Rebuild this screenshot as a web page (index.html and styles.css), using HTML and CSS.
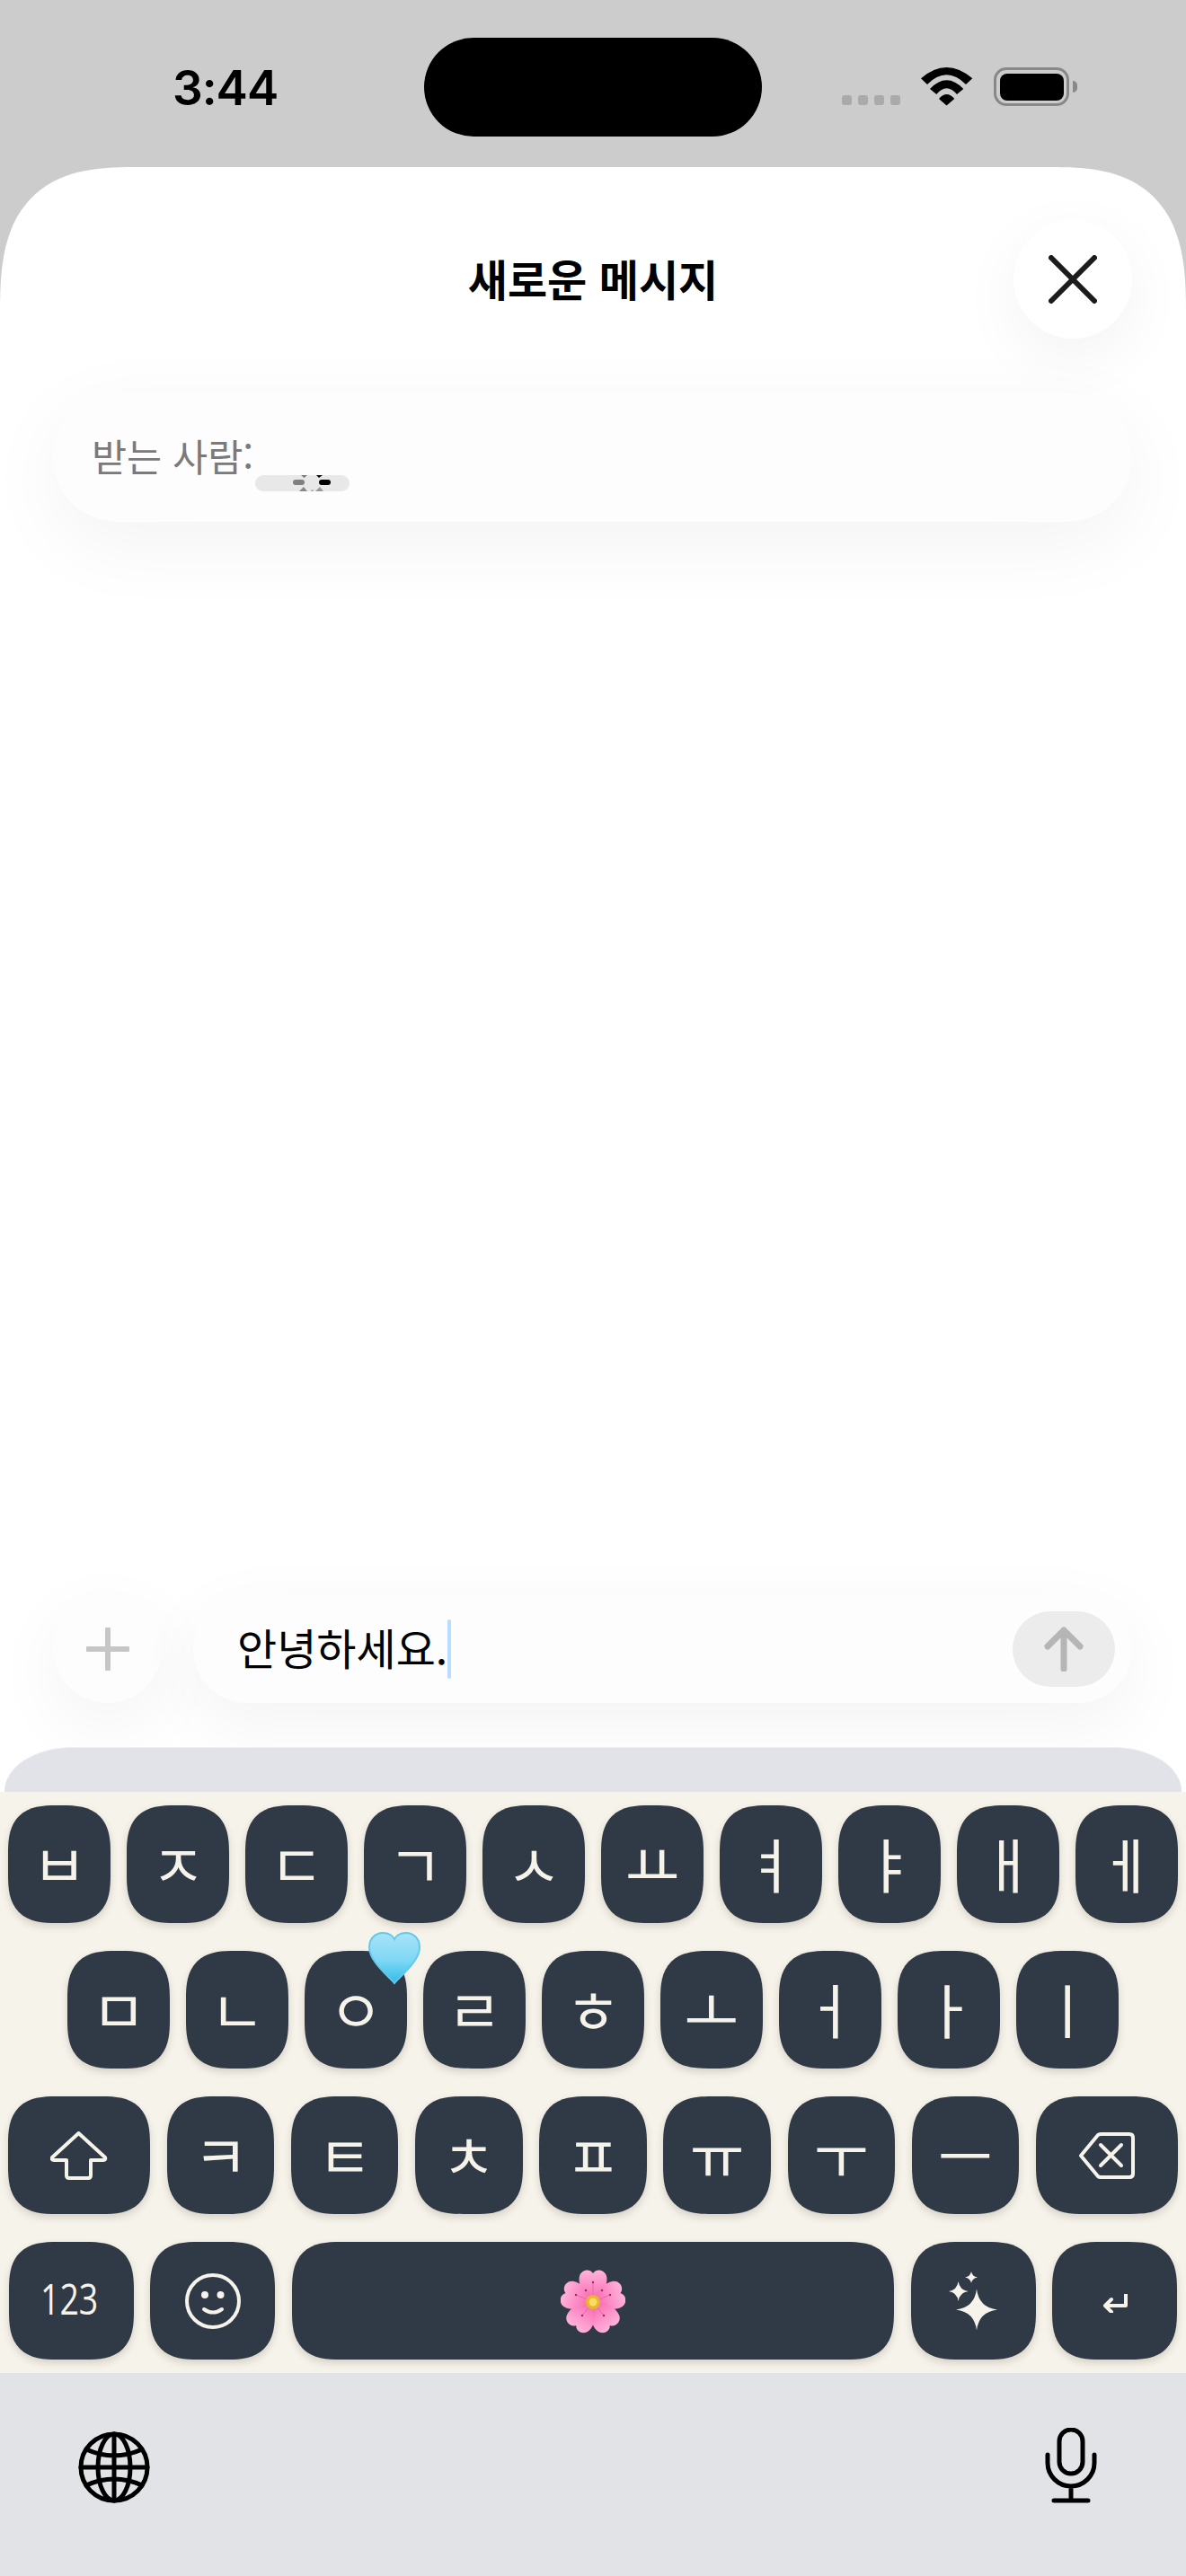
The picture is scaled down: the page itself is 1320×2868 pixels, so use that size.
FILE: index.html
```html
<!DOCTYPE html>
<html lang="ko">
<head>
<meta charset="utf-8">
<title>새로운 메시지</title>
<link rel="stylesheet" href="styles.css">
</head>
<body>
<div class="phone">
  <header class="statusbar">
    <div class="time">3:44</div>
    <div class="island"></div>
    <div class="status-icons">
      <div class="signal"><i></i><i></i><i></i><i></i></div>
      <svg class="wifi" width="58" height="43" viewBox="0 0 58 43"><path d="M0 12.3Q28.5-12.3 57.3 12.3L50 19Q28.5-2.4 7 19Z"/><path d="M10 24Q28.5 4.6 47.3 24L40 30Q28.5 16.6 17.3 30Z"/><path d="M20 35Q28.5 25 37.3 35L28.5 42.5Z"/></svg>
      <div class="battery-wrap"><div class="battery"><div class="battery-fill"></div></div><div class="battery-nub"></div></div>
    </div>
  </header>
  <main class="sheet">
    <div class="sheet-head">
      <div></div>
      <h1 class="title">새로운 메시지</h1>
      <button class="close">
        <svg width="54" height="54" viewBox="0 0 54 54"><path d="M3 3L51 51M51 3L3 51"/></svg>
      </button>
    </div>
    <div class="recipient">
      <span class="to-label">받는 사람:</span>
      <span class="chip">
        <svg width="105" height="18" viewBox="0 0 105 18"><rect x="42" y="5" width="13" height="6" rx="3" fill="#808080"/><rect x="71" y="5" width="13" height="6" rx="3" fill="#000"/><path d="M51 0H58L54.500 3Z" fill="#777"/><path d="M68 0H75L71 3Z" fill="#000"/><path d="M49 18L54 13L58 18Z" fill="#888"/><path d="M67 18L72 13L76 18Z" fill="#999"/><rect x="62" y="16.500" width="3" height="1.500" fill="#aaa"/></svg>
      </span>
    </div>
    <div class="spacer"></div>
    <div class="composer">
      <button class="plus">
        <svg width="48" height="48" viewBox="0 0 48 48"><path d="M24 2V46M2 24H46"/></svg>
      </button>
      <div class="input">
        <span class="input-text">안녕하세요.</span><span class="caret"></span>
        <button class="send">
          <svg width="44" height="50" viewBox="0 0 44 50"><path d="M22 47V4M4 22L22 4L40 22"/></svg>
        </button>
      </div>
    </div>
    <section class="keyboard">
      <div class="kb-cap"></div>
      <div class="keys">
        <div class="row">
          <div class="key">ㅂ</div><div class="key">ㅈ</div><div class="key">ㄷ</div><div class="key">ㄱ</div><div class="key">ㅅ</div><div class="key">ㅛ</div><div class="key">ㅕ</div><div class="key">ㅑ</div><div class="key">ㅐ</div><div class="key">ㅔ</div>
        </div>
        <div class="row">
          <div class="key">ㅁ</div><div class="key">ㄴ</div>
          <div class="key">ㅇ
            <svg class="heart" width="60" height="60" viewBox="0 0 60 60"><defs><linearGradient id="hg" x1="0" y1="0" x2="0" y2="1"><stop offset="0" stop-color="#a9e3f7"/><stop offset=".55" stop-color="#7ed7f4"/><stop offset="1" stop-color="#2fbdea"/></linearGradient></defs><path d="M30 58C21 48 2 33 2 18C2 8 9 2 17 2C23 2 28 5 30 9C32 5 37 2 43 2C51 2 58 8 58 18C58 33 39 48 30 58Z" fill="url(#hg)" stroke="#63c8ea" stroke-width="2"/></svg>
          </div>
          <div class="key">ㄹ</div><div class="key">ㅎ</div><div class="key">ㅗ</div><div class="key">ㅓ</div><div class="key">ㅏ</div><div class="key">ㅣ</div>
        </div>
        <div class="row">
          <div class="key wide">
            <svg class="line-icon" width="64" height="54" viewBox="0 0 64 54"><path d="M31.500 2L2 29Q1 32 4 32H18V49Q18 52 21 52H42Q45 52 45 49V32H59Q62 32 61 29Z"/></svg>
          </div>
          <div class="key mid">ㅋ</div><div class="key mid">ㅌ</div><div class="key mid">ㅊ</div><div class="key mid">ㅍ</div><div class="key mid">ㅠ</div><div class="key mid">ㅜ</div><div class="key mid">ㅡ</div>
          <div class="key wide">
            <svg class="line-icon" width="62" height="52" viewBox="0 0 62 52"><path d="M2 26L21 3Q22 2 24 2H56Q60 2 60 6V46Q60 50 56 50H24Q22 50 21 49Z"/><path d="M24 14L47 37M47 14L24 37"/></svg>
          </div>
        </div>
        <div class="row">
          <div class="key fn"><span class="digits">123</span></div>
          <div class="key fn">
            <svg class="line-icon" width="64" height="64" viewBox="0 0 64 64"><circle cx="32" cy="32" r="29"/><path d="M22 41Q32 48 42 41"/><circle class="dot" cx="23" cy="25" r="4"/><circle class="dot" cx="40.500" cy="25" r="4"/></svg>
          </div>
          <div class="key space">
            <svg width="72" height="72" viewBox="0 0 72 72"><defs><linearGradient id="pg" x1="0" y1="1" x2="0" y2="0"><stop offset="0" stop-color="#f566ab"/><stop offset=".5" stop-color="#fc8cc6"/><stop offset="1" stop-color="#ffb4da"/></linearGradient><path id="petal" d="M36 37C24 30 19 16 21 8C23 1 32-1 36 5C40-1 49 1 51 8C53 16 48 30 36 37Z" fill="url(#pg)"/></defs><use href="#petal"/><use href="#petal" transform="rotate(72 36 37)"/><use href="#petal" transform="rotate(144 36 37)"/><use href="#petal" transform="rotate(216 36 37)"/><use href="#petal" transform="rotate(288 36 37)"/><g stroke="#e0659a" stroke-width=".8"><path d="M36 37V15M36 37L55 29M36 37L48 52M36 37L24 52M36 37L17 29"/></g><g fill="#9a2c55"><circle cx="36" cy="15" r="1.200"/><circle cx="55" cy="29" r="1.200"/><circle cx="48" cy="52" r="1.200"/><circle cx="24" cy="52" r="1.200"/><circle cx="17" cy="29" r="1.200"/><circle cx="28" cy="24" r="1.200"/><circle cx="46" cy="24" r="1.200"/></g><circle cx="36" cy="37" r="8" fill="#e9b52f"/><circle cx="36" cy="37" r="4.500" fill="#f8dc63"/></svg>
          </div>
          <div class="key fn">
            <svg class="fill-icon" width="54" height="66" viewBox="0 0 54 66"><path d="M31 19.500Q33.500 40 54 42.500Q33.500 45 31 65.500Q28.500 45 8 42.500Q28.500 40 31 19.500Z"/><path d="M10.600 11Q12 20.600 21.600 22Q12 23.400 10.600 33Q9.200 23.400 0 22Q9.200 20.600 10.600 11Z"/><path d="M25 0Q26 5.500 32 6.500Q26 7.500 25 13Q24 7.500 18 6.500Q24 5.500 25 0Z"/></svg>
          </div>
          <div class="key fn">
            <svg class="line-icon return" width="28" height="21" viewBox="0 0 28 21"><path d="M26 0V13H3M10 6L3 13L10 20"/></svg>
          </div>
        </div>
      </div>
      <div class="kb-bottom">
        <svg class="globe" width="80" height="80" viewBox="0 0 80 80"><circle cx="40" cy="40" r="37"/><ellipse cx="40" cy="40" rx="18" ry="37"/><path d="M40 3V77M3 40H77M9 20Q40 34 71 20M9 60Q40 46 71 60"/></svg>
        <svg class="mic" width="58" height="84" viewBox="0 0 58 84"><rect x="16" y="2" width="26" height="49" rx="13"/><path d="M3 30V39A26 26 0 0 0 55 39V30M29 65V81M10 81H48"/></svg>
      </div>
    </section>
  </main>
</div>
</body>
</html>
```
FILE: styles.css
```css
* { box-sizing: border-box; }
html, body { margin: 0; padding: 0; }
body { font-family: "Noto Sans CJK KR", "Liberation Sans", sans-serif; background: #ccc; }
button { border: 0; padding: 0; margin: 0; font: inherit; cursor: pointer; }
svg { display: block; }

.phone { width: 1320px; height: 2868px; background: #ccc; display: flex; flex-direction: column; overflow: hidden; }

.statusbar { height: 186px; flex: none; display: grid; grid-template-columns: 472px 376px 1fr; align-items: start; }
.time { font-family: Inter, "Liberation Sans", sans-serif; font-weight: 600; font-size: 53px; letter-spacing: -1px; line-height: 54px; padding-top: 71px; padding-left: 192px; color: #000; }
.island { height: 110px; margin-top: 42px; background: #000; border-radius: 55px; }
.status-icons { display: flex; align-items: flex-end; gap: 23px; padding-top: 75px; padding-left: 89px; }
.signal { display: flex; gap: 7px; padding-bottom: 1px; }
.signal i { display: block; width: 11px; height: 11px; border-radius: 3px; background: #aaa; }
.wifi path { fill: #000; }
.battery-wrap { display: flex; align-items: center; gap: 4px; }
.battery { width: 84px; height: 43px; border: 3.500px solid #888; border-radius: 14px; padding: 3.500px; }
.battery-fill { height: 100%; background: #000; border-radius: 8px; }
.battery-nub { width: 5px; height: 13px; background: #888; border-radius: 0 5px 5px 0; }

.sheet { flex: 1; display: flex; flex-direction: column; background: #fff; border-radius: 150px 150px 0 0 / 160px 160px 0 0; corner-shape: superellipse(1.45); overflow: hidden; }
.sheet-head { display: grid; grid-template-columns: 1fr auto 1fr; align-items: center; padding: 59px 60px 0; }
.title { margin: 0 0 5px; font-size: 48px; font-weight: 700; line-height: 70px; color: #000; }
.close { justify-self: end; width: 132px; height: 132px; border-radius: 50%; background: #fff; display: flex; align-items: center; justify-content: center; box-shadow: 0 20px 70px rgba(0, 0, 0, .05); }
.close path { stroke: #1c1c1c; stroke-width: 6; stroke-linecap: round; fill: none; }

.recipient { margin: 60px 60px 0 59px; height: 144px; border-radius: 72px; background: #fdfdfd; box-shadow: 0 24px 90px rgba(0, 0, 0, .05); display: flex; align-items: flex-start; padding: 40px 0 0 43px; }
.to-label { font-size: 42.500px; line-height: 60px; color: #7a7a7a; white-space: nowrap; }
.chip { flex: none; margin-top: 52px; margin-left: 2px; width: 105px; height: 18px; border-radius: 9px; background: #e8e8e8; overflow: hidden; }

.spacer { flex: 1; }

.composer { display: flex; align-items: center; gap: 35px; padding: 0 60px 0 59px; margin-bottom: 50px; }
.plus { flex: none; width: 121px; height: 121px; border-radius: 50%; background: #fdfdfd; display: flex; align-items: center; justify-content: center; box-shadow: 0 24px 80px rgba(0, 0, 0, .05); }
.plus path { stroke: #c6c6c6; stroke-width: 6; stroke-linecap: round; fill: none; }
.input { flex: 1; height: 121px; border-radius: 60px; background: #fdfdfd; display: flex; align-items: center; padding: 0 19px 0 49px; box-shadow: 0 24px 80px rgba(0, 0, 0, .05); }
.input-text { font-size: 48px; line-height: 66px; color: #000; white-space: nowrap; margin-bottom: 5px; }
.caret { width: 4px; height: 66px; border-radius: 2px; background: #b8dcff; }
.send { margin-left: auto; width: 114px; height: 84px; border-radius: 42px; background: #ececec; display: flex; align-items: center; justify-content: center; }
.send path { stroke: #b5b5b5; stroke-width: 7; stroke-linecap: round; stroke-linejoin: round; fill: none; }

.keyboard { flex: none; display: flex; flex-direction: column; }
.kb-cap { height: 49px; margin: 0 5px; background: #e2e3e8; border-radius: 80px 80px 0 0 / 52px 52px 0 0; box-shadow: 0 -1px 0 #eef0f4; }
.keys { background: #f6f3eb; padding: 15px 0; display: flex; flex-direction: column; gap: 31px; }
.row { display: flex; justify-content: center; gap: 18.800px; }
.key { position: relative; flex: none; width: 113.200px; height: 131px; padding-bottom: 6px; border-radius: 54px; corner-shape: superellipse(1.45); background: #303a46; color: #f6f3eb; display: flex; align-items: center; justify-content: center; font-size: 66px; line-height: 1; box-shadow: 0 4px 9px rgba(90, 75, 50, .2); }
.key.mid { width: 119.300px; }
.key.wide { width: 158px; padding-bottom: 0; }
.key.fn { width: 139px; padding-bottom: 0; }
.key.space { width: 669.500px; padding-bottom: 0; }
.digits { display: block; font-family: "Open Sans", sans-serif; font-weight: 400; font-size: 48px; transform: scaleX(.78); margin-bottom: 6px; margin-right: 3px; }
.heart { position: absolute; left: 70px; top: -22px; }
.line-icon path, .line-icon circle { stroke: #f6f3eb; stroke-width: 4; fill: none; stroke-linejoin: round; stroke-linecap: round; }
.line-icon .dot { fill: #f6f3eb; stroke: none; }
.fill-icon path { fill: #f6f3eb; }
.return { margin-top: 6px; }

.kb-bottom { height: 226px; background: #e2e3e7; display: flex; justify-content: space-between; align-items: flex-start; padding: 61px 99px 0 87px; }
.globe { margin-top: 4px; }
.globe circle, .globe ellipse, .globe path, .mic rect, .mic path { stroke: #000; stroke-width: 5; fill: none; stroke-linecap: round; }
```
